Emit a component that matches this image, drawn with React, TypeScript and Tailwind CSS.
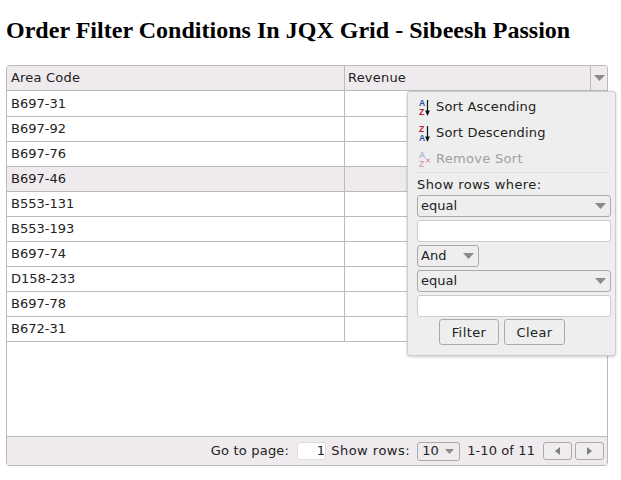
const rows = ["B697-31","B697-92","B697-76","B697-46","B553-131","B553-193","B697-74","D158-233","B697-78","B672-31"];

function Caret({ className = "" }: { className?: string }) {
  return (
    <svg width="11" height="6" viewBox="0 0 11 6" className={className}>
      <path d="M0 0H11L5.5 6Z" fill="#8a8a8a" />
    </svg>
  );
}

function SortIcon({ top, bottom, muted, cross }: { top: string; bottom: string; muted?: boolean; cross?: boolean }) {
  const blue = muted ? "#a9b6d0" : "#2a4f9e";
  const red = muted ? "#d9a3ac" : "#b3202f";
  const tc = top === "A" ? blue : red;
  const bc = bottom === "A" ? blue : red;
  return (
    <svg width="14" height="17" viewBox="0 0 14 17" className="shrink-0">
      <text x="1" y="7" fontSize="8.5" fontWeight="700" fontFamily="'Liberation Sans', sans-serif" fill={tc}>{top}</text>
      <text x="1" y="15.5" fontSize="8.5" fontWeight="700" fontFamily="'Liberation Sans', sans-serif" fill={bc}>{bottom}</text>
      {cross ? (
        <path d="M8 7.5L12 11.5M12 7.5L8 11.5" stroke="#cf7f86" strokeWidth="1" fill="none" />
      ) : (
        <path d="M9.5 1V13M8 12L9.5 15.5L11 12Z" stroke="#111" strokeWidth="1.2" fill="#111" />
      )}
    </svg>
  );
}

function Select({ label, className = "" }: { label: string; className?: string }) {
  return (
    <div className={`flex h-[22px] items-center justify-between rounded-[3px] border border-[#aaaaaa] bg-[#eeeeee] pl-[3px] pr-[4px] ${className}`}>
      <span>{label}</span>
      <Caret />
    </div>
  );
}

function PagerBtn({ dir }: { dir: "l" | "r" }) {
  return (
    <div className="flex h-[18px] w-[29px] items-center justify-center rounded-[3px] border border-[#aaaaaa] bg-[#efedf0]">
      <svg width="5" height="8" viewBox="0 0 5 8">
        <path d={dir === "l" ? "M5 0V8L0 4Z" : "M0 0V8L5 4Z"} fill="#808080" />
      </svg>
    </div>
  );
}

export default function App() {
  return (
    <div className="h-[480px] w-[621px] overflow-hidden bg-white pl-[6px] text-[13px] leading-[16px] text-[#222222] [font-family:'DejaVu_Sans',Verdana,sans-serif]">
      <h1 className="pb-[20px] pt-[16px] text-[24px] font-bold leading-[29px] text-black tracking-[0.02px] [font-family:'Liberation_Serif',serif]">
        Order Filter Conditions In JQX Grid - Sibeesh Passion
      </h1>
      <div className="relative flex h-[401px] w-[602px] flex-col rounded-[3px] border border-[#bbbbbb]">
        <div className="flex h-[25px] shrink-0 border-b border-[#bbbbbb] bg-[#efeaee]">
          <div className="flex w-[338px] items-center border-r border-[#bbbbbb] pl-[4px] tracking-[0.2px]">Area Code</div>
          <div className="flex flex-1 items-center pl-[3px] tracking-[0.2px]">Revenue</div>
          <div className="flex w-[17px] items-center justify-center border-l border-[#bbbbbb]">
            <Caret />
          </div>
        </div>
        <div className="flex-1">
          {rows.map((r, i) => (
            <div key={r} className={`flex h-[25px] border-b border-[#bbbbbb] first:h-[26px] ${i === 3 ? "bg-[#efeaee]" : "bg-white"}`}>
              <div className="flex w-[338px] items-center border-r border-[#bbbbbb] pl-[4px]">{r}</div>
              <div className="flex-1" />
            </div>
          ))}
        </div>
        <div className="flex h-[29px] shrink-0 items-center justify-end border-t border-[#bbbbbb] bg-[#efeaee] pr-[3px]">
          <span className="tracking-[0.2px]">Go to page:</span>
          <div className="ml-[8px] flex h-[18px] w-[29px] items-center justify-end rounded-[3px] border border-[#dddddd] bg-white pr-[0px]">1</div>
          <span className="ml-[5px] tracking-[0.5px]">Show rows:</span>
          <div className="ml-[7px] flex h-[19px] w-[43px] items-center justify-between rounded-[3px] border border-[#aaaaaa] pl-[4px] pr-[5px]">
            <span>10</span>
            <svg width="9" height="5" viewBox="0 0 9 5"><path d="M0 0H9L4.5 5Z" fill="#8a8a8a" /></svg>
          </div>
          <span className="ml-[7px] tracking-[0.1px]">1-10 of 11</span>
          <div className="ml-[8px] flex gap-[3px]">
            <PagerBtn dir="l" />
            <PagerBtn dir="r" />
          </div>
        </div>
        <div className="absolute left-[400px] top-[25px] h-[265px] w-[209px] rounded-[3px] border border-[#cccccc] bg-[#eeeeee] pl-[9px] pr-[4px] shadow-[0_1px_3px_rgba(0,0,0,0.2)]">
          <div className="flex h-[26px] items-center gap-[4px] pl-[1px] pt-[4px] tracking-[0.15px]"><SortIcon top="A" bottom="Z" />Sort Ascending</div>
          <div className="flex h-[26px] items-center gap-[4px] pl-[1px] pt-[4px] tracking-[0.15px]"><SortIcon top="Z" bottom="A" />Sort Descending</div>
          <div className="flex h-[26px] items-center gap-[4px] pl-[1px] pt-[4px] text-[#a0a0a0] tracking-[0.3px]"><SortIcon top="A" bottom="Z" muted cross />Remove Sort</div>
          <div className="-ml-[2px] mr-[2px] mt-[2px] border-t border-[#e0e0e0]" />
          <div className="pt-[4px] tracking-[0.4px]">Show rows where:</div>
          <div className="mt-[2px] flex flex-col gap-[3px]">
            <Select label="equal" />
            <div className="h-[22px] rounded-[3px] border border-[#cccccc] bg-white" />
            <Select label="And" className="w-[62px]" />
            <Select label="equal" />
            <div className="h-[22px] rounded-[3px] border border-[#cccccc] bg-white" />
          </div>
          <div className="ml-[22px] mt-[2px] flex gap-[5px] tracking-[0.4px]">
            <div className="flex h-[26px] w-[60px] items-center justify-center rounded-[3px] border border-[#aaaaaa] pt-[1px]">Filter</div>
            <div className="flex h-[26px] w-[61px] items-center justify-center rounded-[3px] border border-[#aaaaaa] pt-[1px]">Clear</div>
          </div>
        </div>
      </div>
    </div>
  );
}
